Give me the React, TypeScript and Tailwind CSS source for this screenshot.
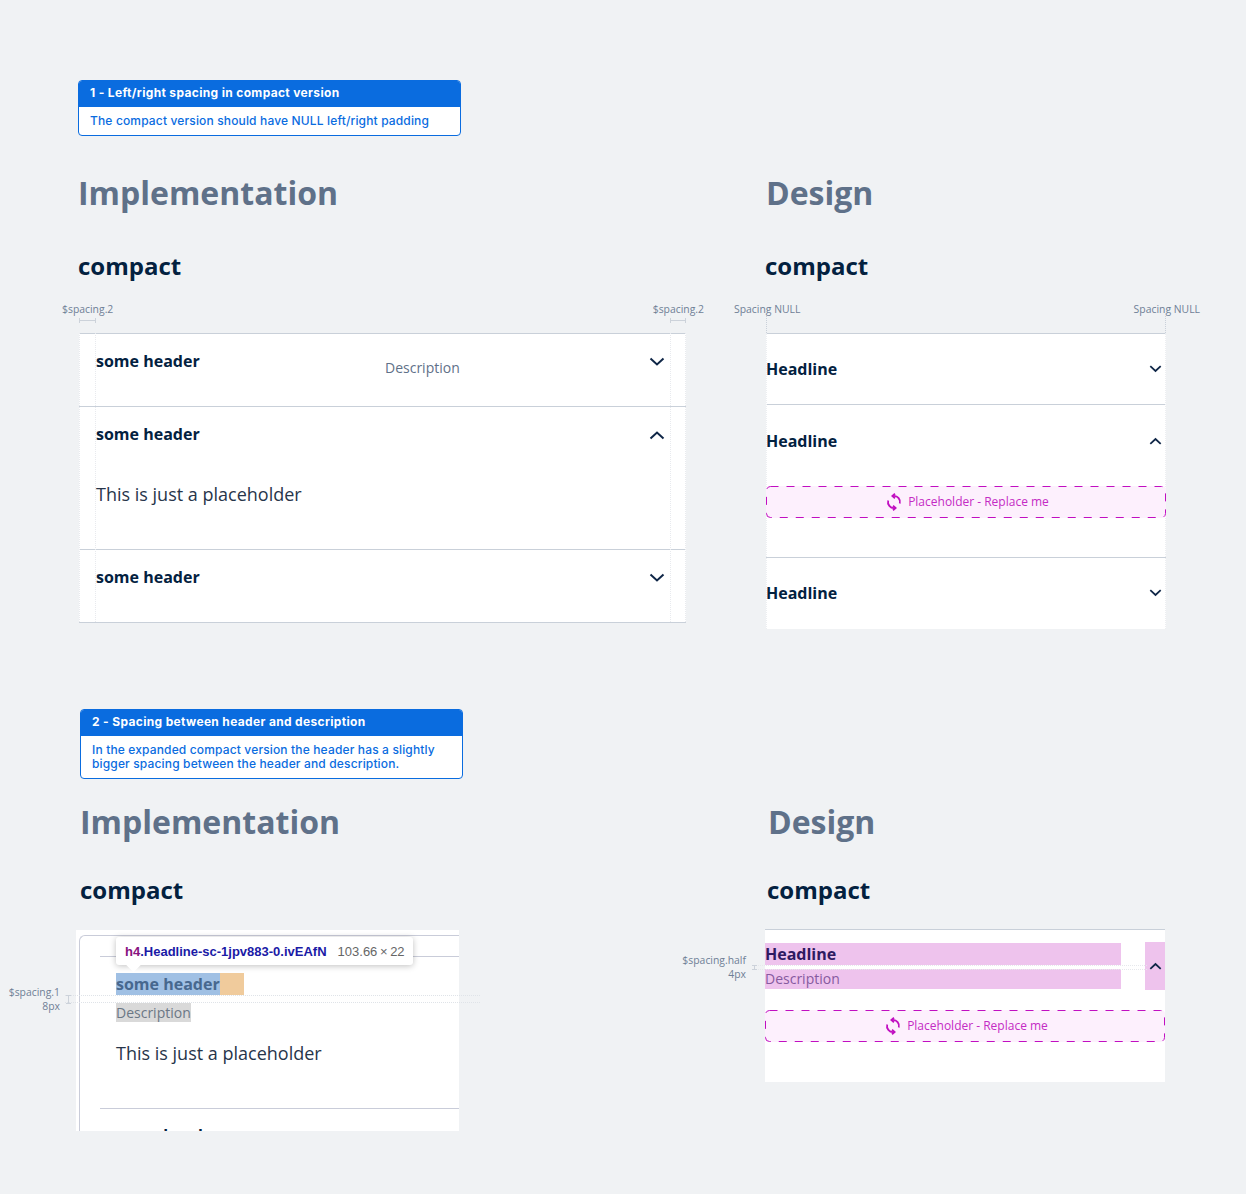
import React from 'react';

const sans = 'font-["Open_Sans",sans-serif]';

const Chevron: React.FC<{ up?: boolean; size?: 'lg' | 'sm' }> = ({ up, size = 'lg' }) => (
  <svg
    viewBox="0 0 16 10"
    className={size === 'lg' ? 'w-4 h-[10px] text-[#0f2647]' : 'w-[13px] h-2 text-[#0f2647]'}
    fill="none"
    stroke="currentColor"
    strokeWidth={size === 'lg' ? 2 : 2.2}
  >
    <path d={up ? 'M1.5 8.5 8 2.5l6.5 6' : 'M1.5 1.5 8 7.5l6.5-6'} />
  </svg>
);

const SyncIcon: React.FC = () => (
  <svg viewBox="0 0 16 18" className="w-4 h-[18px] shrink-0" fill="none" stroke="#c10fc1" strokeWidth="1.8">
    <path d="M13.8 10.6A6 6 0 0 0 7.5 3" />
    <path d="M2.2 7.4A6 6 0 0 0 8.5 15" />
    <path d="M9 .8 6.4 3 9 5.2" />
    <path d="M7 12.8 9.6 15 7 17.2" />
  </svg>
);

const Placeholder: React.FC<{ className?: string }> = ({ className }) => (
  <div className={`relative h-8 w-[400px] bg-[#fdf0fd] rounded flex items-center justify-center gap-[6px] pl-[3px] ${className ?? ''}`}>
    <svg className="absolute inset-0 w-full h-full" viewBox="0 0 400 32" fill="none">
      <rect x="0.5" y="0.5" width="399" height="31" rx="4" stroke="#c10fc1" strokeDasharray="8 8" />
    </svg>
    <SyncIcon />
    <span className={`${sans} text-xs text-[#c42bc4]`}>Placeholder - Replace me</span>
  </div>
);

const Banner: React.FC<{ title: string; lines: string[] }> = ({ title, lines }) => (
  <div className="w-[383px] border border-[#0a6cdf] rounded bg-white overflow-hidden font-['Inter',sans-serif]">
    <div className="h-[26px] bg-[#0a6cdf] px-[11px] text-xs font-bold leading-[24px] tracking-[0.34px] text-white">{title}</div>
    <div className="px-[11px] py-[7px] text-xs font-medium leading-[14px] tracking-[0.15px] text-[#0a6cdf]">
      {lines.map((l) => (
        <div key={l}>{l}</div>
      ))}
    </div>
  </div>
);

const Title: React.FC<{ children: React.ReactNode }> = ({ children }) => (
  <h2 className={`${sans} text-[32px] font-bold leading-[44px] text-[#5f7189]`}>{children}</h2>
);

const Compact: React.FC = () => (
  <h3 className={`${sans} text-2xl font-bold leading-8 text-[#03213f]`}>compact</h3>
);

const Note: React.FC<{ children: React.ReactNode }> = ({ children }) => (
  <span className={`${sans} whitespace-nowrap text-[10.4px] leading-[14px] text-[#6f8096]`}>{children}</span>
);

// bracket drawn over the padding it measures
const Tick: React.FC<{ w: string }> = ({ w }) => (
  <div className={`h-[5px] border-x border-[#ccd2da] ${w}`}>
    <div className="mt-[2px] h-px bg-[#ccd2da]" />
  </div>
);

const ImplRow: React.FC<{ h: string; up?: boolean; desc?: boolean; children?: React.ReactNode }> = ({ h, up, desc, children }) => (
  <div className={`border-t border-[#c9d0d9] pl-[17px] pr-[21px] pt-4 ${h}`}>
    <div className="flex items-start">
      <h4 className={`${sans} w-[289px] text-base font-bold leading-[22px] text-[#03213f]`}>some header</h4>
      <div className="flex-1">
        {desc && <p className={`${sans} mt-2 text-sm leading-5 text-[#5f7189]`}>Description</p>}
      </div>
      <div className="mt-[7px]">
        <Chevron up={up} />
      </div>
    </div>
    {children}
  </div>
);

const DesignRow: React.FC<{ className: string; up?: boolean; children?: React.ReactNode }> = ({ className, up, children }) => (
  <div className={`border-t border-[#c9d0d9] ${className}`}>
    <div className="flex items-center justify-between pr-[4px]">
      <h4 className={`${sans} text-base font-bold leading-[22px] text-[#03213f]`}>Headline</h4>
      <Chevron up={up} size="sm" />
    </div>
    {children}
  </div>
);

export default function App() {
  return (
    <div className="h-[1194px] w-[1246px] overflow-hidden bg-[#f0f2f4] pt-20">
      {/* section 1 */}
      <section className="pl-[78px]">
        <Banner title="1 - Left/right spacing in compact version" lines={['The compact version should have NULL left/right padding']} />
        <div className="mt-[35px] flex">
          <div className="w-[687px]">
            <Title>Implementation</Title>
            <div className="mt-[35px]">
              <Compact />
            </div>
            <div className="mt-5 ml-[1px] w-[607px]">
              <div className="ml-[-17px] mr-[-18px] flex h-[14px] justify-between">
                <Note>$spacing.2</Note>
                <Note>$spacing.2</Note>
              </div>
              <div className="flex h-[17px] justify-between pt-[2px]">
                <Tick w="w-[17px]" />
                <Tick w="w-[16px]" />
              </div>
              <div className="relative border-b border-[#c9d0d9] bg-white">
                <div className="absolute left-0 top-0 bottom-0 w-[17px] border-x border-dotted border-[#e8eaee]" />
                <div className="absolute right-0 top-0 bottom-0 w-[16px] border-x border-dotted border-[#e8eaee]" />
                <ImplRow h="h-[73px]" desc />
                <ImplRow h="h-[143px]" up>
                  <p className={`${sans} mt-[35px] text-lg leading-7 text-[#27354a]`}>This is just a placeholder</p>
                </ImplRow>
                <ImplRow h="h-[73px]" />
              </div>
            </div>
          </div>
          <div>
            <div className="pl-[1px]">
              <Title>Design</Title>
            </div>
            <div className="mt-[35px]">
              <Compact />
            </div>
            <div className="mt-5 ml-[1px] w-[400px]">
              <div className="ml-[-32px] mr-[-34px] flex h-[14px] justify-between">
                <Note>Spacing NULL</Note>
                <Note>Spacing NULL</Note>
              </div>
              <div className="flex h-[17px] justify-between">
                <div className="h-[17px] border-l border-dotted border-[#c9d0d9]" />
                <div className="h-[17px] border-l border-dotted border-[#c9d0d9]" />
              </div>
              <div className="relative bg-white">
                <div className="absolute inset-0 border-x border-dotted border-[#eceef1]" />
                <DesignRow className="h-[71px] pt-6" />
                <DesignRow className="h-[153px] pt-[25px]" up>
                  <Placeholder className="mt-[34px]" />
                </DesignRow>
                <DesignRow className="h-[72px] pt-6" />
              </div>
            </div>
          </div>
        </div>
      </section>

      {/* section 2 */}
      <section className="mt-[80px] pl-[80px]">
        <Banner
          title="2 - Spacing between header and description"
          lines={['In the expanded compact version the header has a slightly', 'bigger spacing between the header and description.']}
        />
        <div className="mt-[21px] flex">
          <div className="w-[687px]">
            <Title>Implementation</Title>
            <div className="mt-[30px]">
              <Compact />
            </div>
            <div className="relative mt-6 ml-[-4px] w-[383px]">
              <div className="absolute right-full top-[55px] mr-[16px] flex flex-col items-end">
                <Note>$spacing.1</Note>
                <Note>8px</Note>
              </div>
              <div className="absolute left-[-11px] top-[65px] h-[8px] w-[415px] border-y border-dotted border-[#dfe3e8]" />
              <div className="absolute left-[-10px] top-[65px] h-[9px] w-[5px] border-y border-[#ccd2da]">
                <div className="mx-auto h-full w-px bg-[#ccd2da]" />
              </div>
              <div className="h-[201px] overflow-hidden bg-white pl-[3px] pt-[5px]">
                <div className="h-[240px] rounded-tl-md border-l border-t border-[#c9ccd9] pl-5 pt-5">
                  <div className="border-t border-[#c9ccd9] pl-4 pt-4">
                    <div className="flex h-[22px] w-[128px] bg-[#f0cb9c]">
                      <h4 className={`${sans} w-[104px] bg-[#a0c0e4] text-base font-bold leading-[22px] text-[#47688f]`}>some header</h4>
                    </div>
                    <p className={`${sans} mt-2 h-[19px] w-[75px] whitespace-nowrap bg-[#d9d9d9] text-sm leading-[19px] text-[#6b7785]`}>Description</p>
                    <p className={`${sans} mt-[17px] text-lg leading-7 text-[#27354a]`}>This is just a placeholder</p>
                  </div>
                  <div className="mt-[41px] border-t border-[#c9ccd9] pl-4 pt-[15px]">
                    <h4 className={`${sans} text-base font-bold leading-[22px] text-[#03213f]`}>some header</h4>
                  </div>
                </div>
              </div>
              {/* devtools tooltip */}
              <div className="absolute left-[40px] top-[7px] flex h-[28px] w-[297px] items-center rounded-[3px] bg-white pl-[9px] pt-px font-['Liberation_Sans',sans-serif] text-[13px] shadow-[0_1px_6px_rgba(0,0,0,0.25)]">
                <span className="font-bold text-[#881280]">h4</span>
                <span className="font-bold text-[#1a1aa6]">.Headline-sc-1jpv883-0.ivEAfN</span>
                <span className="ml-[11px] text-[#666]">103.66{'\u2009×\u2009'}22</span>
                <div className="absolute left-[12px] top-[22px] size-[11px] rotate-45 bg-white" />
              </div>
            </div>
          </div>
          <div>
            <div className="pl-[1px]">
              <Title>Design</Title>
            </div>
            <div className="mt-[30px]">
              <Compact />
            </div>
            <div className="relative mt-[23px] ml-[-2px] h-[153px] w-[400px] border-t border-[#c9d0d9] bg-white">
              <div className="absolute right-full top-[23px] mr-[19px] flex flex-col items-end">
                <Note>$spacing.half</Note>
                <Note>4px</Note>
              </div>
              <div className="absolute left-[-13px] top-[35px] h-[5px] w-[395px] border-y border-dotted border-[#e6e8ec]" />
              <div className="absolute left-[-13px] top-[35px] h-[5px] w-[5px] border-y border-[#ccd2da]">
                <div className="mx-auto h-full w-px bg-[#ccd2da]" />
              </div>
              <div className="flex pt-3">
                <div className="w-[356px] pt-px">
                  <h4 className={`${sans} h-[22px] bg-[#eec3ed] text-base font-bold leading-[22px] text-[#2f1a61]`}>Headline</h4>
                  <p className={`${sans} mt-1 h-5 bg-[#eec3ed] text-sm leading-5 text-[#865a9f]`}>Description</p>
                </div>
                <div className="ml-auto flex h-12 w-5 items-center justify-center bg-[#eec3ed]">
                  <Chevron up size="sm" />
                </div>
              </div>
              <Placeholder className="mt-5" />
            </div>
          </div>
        </div>
      </section>
    </div>
  );
}
